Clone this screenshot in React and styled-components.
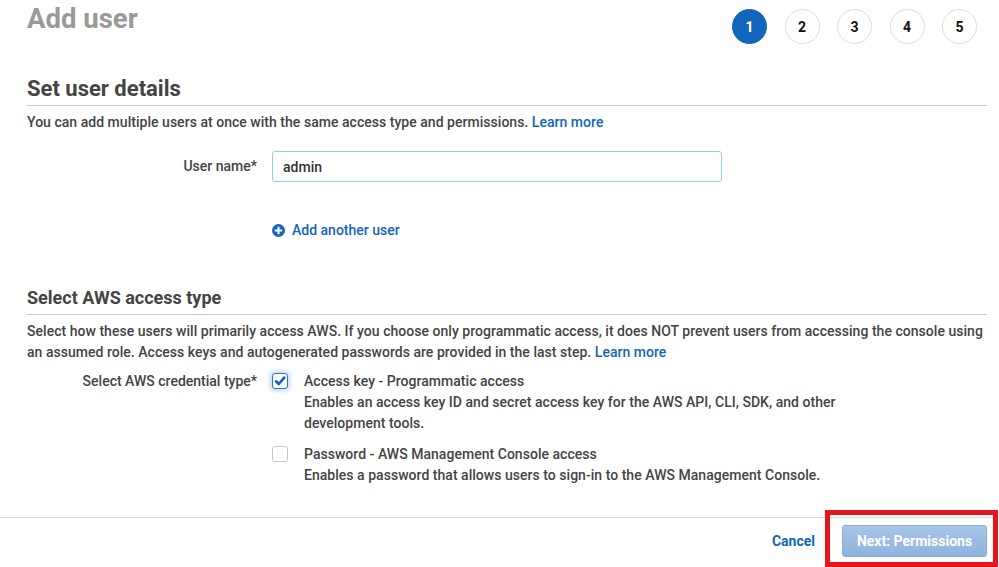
import React from "react";
import styled, { createGlobalStyle } from "styled-components";

const Global = createGlobalStyle`
  html, body { margin: 0; padding: 0; background: #fff; }
  body { font-family: Roboto, "Noto Sans", "Liberation Sans", sans-serif; color: #444; -webkit-font-smoothing: antialiased; }
  * { box-sizing: border-box; }
`;

const Page = styled.div`
  position: relative;
  width: 999px;
  height: 567px;
  overflow: hidden;
`;

const Content = styled.div`
  padding: 0 12px 0 27px;
`;

const Header = styled.div`
  display: flex;
  justify-content: space-between;
  align-items: flex-start;
  height: 75px;
`;

const Title = styled.h1`
  margin: 4px 0 0;
  font-size: 27.5px;
  line-height: 30px;
  font-weight: 700;
  color: #999;
`;

const Steps = styled.div`
  display: flex;
  gap: 17.5px;
  margin-top: 9px;
  margin-right: 10px;
`;

const Step = styled.div`
  width: 35px;
  height: 35px;
  border-radius: 50%;
  display: flex;
  align-items: center;
  justify-content: center;
  font-size: 14px;
  font-weight: 700;
  background: ${p => (p.$active ? "#1166bb" : "#fff")};
  color: ${p => (p.$active ? "#fff" : "#111")};
  border: 1px solid ${p => (p.$active ? "#1166bb" : "#ddd")};
`;

const SectionTitle = styled.h2`
  margin: 0;
  font-size: ${p => p.$size || 22}px;
  line-height: 28px;
  font-weight: 700;
  color: #444;
  padding-bottom: ${p => p.$pb || 2}px;
  border-bottom: 1px solid #ccc;
`;

const Para = styled.p`
  margin: 0;
  font-size: 14px;
  line-height: 21px;
  font-weight: 500;
  color: #444;
  letter-spacing: 0.03px;
`;

const Link = styled.a`
  color: #1166bb;
  text-decoration: none;
  font-weight: 500;
  cursor: pointer;
`;

const FormRow = styled.div`
  display: grid;
  grid-template-columns: 230px 1fr;
  column-gap: 15px;
  align-items: start;
`;

const Label = styled.div`
  text-align: right;
  font-size: 14px;
  font-weight: 500;
  line-height: 20px;
  color: #444;
  padding-top: ${p => p.$pt || 0}px;
`;

const Input = styled.input`
  width: 450px;
  height: 31px;
  border: 1px solid #8fd0e6;
  border-radius: 3px;
  padding: 0 10px;
  font-family: inherit;
  font-size: 14px;
  font-weight: 500;
  color: #333;
  outline: none;
`;

const AddLink = styled(Link)`
  display: inline-flex;
  align-items: center;
  gap: 7px;
  font-size: 14px;
`;

const Options = styled.div`
  display: flex;
  flex-direction: column;
  gap: 10px;
`;

const Option = styled.label`
  display: flex;
  gap: 16px;
  align-items: flex-start;
`;

const Box = styled.span`
  flex: none;
  width: 16px;
  height: 16px;
  margin-top: 2px;
  border-radius: 3px;
  border: 1px solid ${p => (p.$checked ? "#2a74c4" : "#c8c8c8")};
  background: #fff;
  box-shadow: ${p => (p.$checked ? "0 0 4px 2px rgba(80,150,230,0.35)" : "none")};
  display: flex;
  align-items: center;
  justify-content: center;
`;

const OptionText = styled.div`
  font-size: 14px;
  font-weight: 500;
  line-height: 21px;
  color: #444;
  letter-spacing: 0.03px;
`;

const Footer = styled.div`
  position: absolute;
  left: 0;
  right: 0;
  top: 517px;
  border-top: 1px solid #ddd;
  display: flex;
  justify-content: flex-end;
  align-items: center;
  gap: 27px;
  padding: 7px 12px 0 0;
`;

const Cancel = styled(Link)`
  font-size: 14px;
  font-weight: 700;
`;

const Primary = styled.button`
  width: 145px;
  height: 32px;
  border-radius: 3px;
  border: 1px solid #86acd8;
  background: linear-gradient(#a6c5e8, #8fb3de);
  color: #fff;
  font-family: inherit;
  font-size: 14px;
  font-weight: 700;
`;

const Highlight = styled.div`
  position: absolute;
  left: 825px;
  top: 510px;
  width: 173px;
  height: 57px;
  border: 5px solid #e8141c;
  pointer-events: none;
`;

const Spacer = styled.div`
  margin-top: ${p => p.$m}px;
`;

export default function App() {
  return (
    <Page>
      <Global />
      <Content>
        <Header>
          <Title>Add user</Title>
          <Steps>
            {[1, 2, 3, 4, 5].map(n => (
              <Step key={n} $active={n === 1}>{n}</Step>
            ))}
          </Steps>
        </Header>

        <SectionTitle>Set user details</SectionTitle>
        <Spacer $m={6}>
          <Para>
            You can add multiple users at once with the same access type and permissions. <Link>Learn more</Link>
          </Para>
        </Spacer>

        <Spacer $m={18}>
          <FormRow>
            <Label $pt={5}>User name*</Label>
            <Input defaultValue="admin" />
          </FormRow>
        </Spacer>
        <Spacer $m={40}>
          <FormRow>
            <span />
            <AddLink>
              <svg width="13" height="13" viewBox="0 0 14 14">
                <circle cx="7" cy="7" r="7" fill="#1166bb" />
                <rect x="3" y="5.9" width="8" height="2.2" fill="#fff" />
                <rect x="5.9" y="3" width="2.2" height="8" fill="#fff" />
              </svg>
              Add another user
            </AddLink>
          </FormRow>
        </Spacer>

        <Spacer $m={46}>
          <SectionTitle $size={18} $pb={2}>Select AWS access type</SectionTitle>
        </Spacer>
        <Spacer $m={6}>
          <Para>
            Select how these users will primarily access AWS. If you choose only programmatic access, it does NOT prevent users from accessing the console using an assumed role. Access keys and autogenerated passwords are provided in the last step. <Link>Learn more</Link>
          </Para>
        </Spacer>

        <Spacer $m={8}>
          <FormRow>
            <Label>Select AWS credential type*</Label>
            <Options>
              <Option>
                <Box $checked>
                  <svg width="12" height="12" viewBox="0 0 12 12">
                    <path d="M2 6.3 L4.8 9 L10.2 2.6" fill="none" stroke="#1a5fb4" strokeWidth="2.6" strokeLinecap="round" strokeLinejoin="round" />
                  </svg>
                </Box>
                <OptionText>
                  Access key - Programmatic access<br />
                  Enables an access key ID and secret access key for the AWS API, CLI, SDK, and other<br />
                  development tools.
                </OptionText>
              </Option>
              <Option>
                <Box />
                <OptionText>
                  Password - AWS Management Console access<br />
                  Enables a password that allows users to sign-in to the AWS Management Console.
                </OptionText>
              </Option>
            </Options>
          </FormRow>
        </Spacer>
      </Content>

      <Footer>
        <Cancel>Cancel</Cancel>
        <Primary>Next: Permissions</Primary>
      </Footer>
      <Highlight />
    </Page>
  );
}
